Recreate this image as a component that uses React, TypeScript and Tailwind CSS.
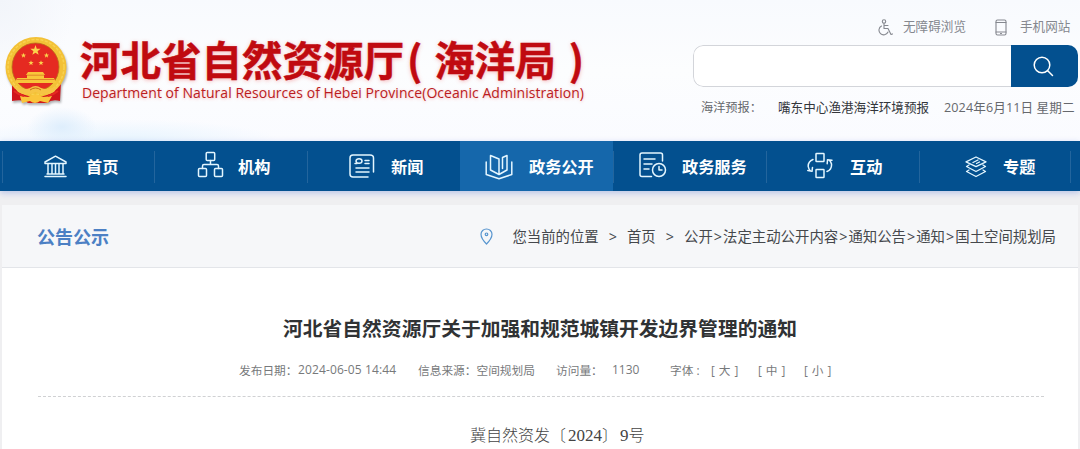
import React from 'react';

const SANS = "font-['Open_Sans','Noto_Sans_CJK_SC',sans-serif]";

type IconProps = { className: string; children: React.ReactNode; box: string };
function Icon({ className, children, box }: IconProps) {
  return (
    <svg className={className} viewBox={box} fill="none" stroke="currentColor" strokeWidth="1.5" strokeLinecap="round" strokeLinejoin="round">
      {children}
    </svg>
  );
}

function Star({ x, y, r }: { x: number; y: number; r: number }) {
  const pts = Array.from({ length: 10 }, (_, i) => {
    const a = (Math.PI / 5) * i - Math.PI / 2;
    const q = i % 2 ? r * 0.4 : r;
    return `${x + q * Math.cos(a)},${y + q * Math.sin(a)}`;
  }).join(' ');
  return <polygon points={pts} fill="#fbd34c" />;
}

function Emblem() {
  return (
    <svg className="h-[70px] w-[66px] shrink-0 drop-shadow-[1px_2px_1px_rgba(0,0,0,0.3)]" viewBox="0 0 66 70">
      <path d="M8 46 L8 65 Q20 63 24 67 L43 67 Q48 63 56 65 L57 46Z" fill="#cf151b" />
      <ellipse cx="32" cy="31" rx="30.5" ry="30" fill="#f3c136" />
      <ellipse cx="32" cy="31" rx="28" ry="27.5" fill="none" stroke="#f8d250" strokeWidth="1.5" strokeDasharray="3 1.5" />
      <ellipse cx="31.5" cy="31" rx="23.500" ry="24" fill="#e52a21" stroke="#b9701c" strokeWidth="0.8" />
      <Star x={31.5} y={14.5} r={5.4} />
      <Star x={19.5} y={19.5} r={2.8} />
      <Star x={42.5} y={19.5} r={2.8} />
      <Star x={27} y={27} r={2.8} />
      <Star x={37} y={27} r={2.8} />
      <path d="M24 36h15l2 3h-1v3h10l2 5H11l2-5h10v-3h-1z" fill="#f8c63a" />
      <path d="M23 39.200h17M13 43.500h37" stroke="#d66a20" strokeWidth="0.7" />
      <path d="M8 48Q18 55 26 52Q31.500 48 37 52Q46 55 56 48L50 56Q42 61 31.500 56Q22 61 14 56Z" fill="#f6c444" />
      <path d="M26 54q5.500-4 11 0" stroke="#c9671c" fill="none" />
      <path d="M16 60l8 1 7.500-3 7.500 3 9-1-4 7-8-2q-5 4-10 0l-8 2z" fill="#fac53b" />
      <path d="M10 55q5 4 10 5M54 55q-5 4-10 5" stroke="#e52a21" strokeWidth="2" fill="none" />
    </svg>
  );
}

const navItems: { label: string; cell: string; text: string; active?: boolean; icon: React.ReactNode }[] = [
  {
    label: '首页', cell: 'w-[152px] pl-[42px]', text: 'ml-[19px]',
    icon: (
      <Icon className="h-[23px] w-[23px]" box="0 0 23 23">
        <path d="M1 8.500V7L11.500 1.200 22 7v1.500zM3 21.500h17M1 21.500h21M3 19h17M4 9v10M8 9v10M11.500 9v10M15 9v10M19 9v10" />
      </Icon>
    ),
  },
  {
    label: '机构', cell: 'w-[153px] pl-[43px]', text: 'ml-[14px]',
    icon: (
      <Icon className="mb-[3px] h-[27px] w-[27px]" box="0 0 27 27">
        <rect x="9.200" y="1.500" width="8.500" height="8" rx="1" /><rect x="1.500" y="17.500" width="8" height="8" rx="1" /><rect x="17.500" y="17.500" width="8" height="8" rx="1" />
        <path d="M13.500 9.500v4M5.500 17.500v-2.500q0-1.500 1.500-1.500h13q1.500 0 1.500 1.500v2.500" />
      </Icon>
    ),
  },
  {
    label: '新闻', cell: 'w-[153px] pl-[42px]', text: 'ml-[16px]',
    icon: (
      <Icon className="mb-[1px] h-[24px] w-[26px]" box="0 0 26 24">
        <path d="M19 23H4q-3 0-3-3V4q0-3 3-3h17q3.500 0 3.500 3v14M16 6.500h4M16 9.500h4M7 14h13M7 18h13M6 9.500h2" /><ellipse cx="10" cy="7" rx="3" ry="2.300" />
      </Icon>
    ),
  },
  {
    label: '政务公开', cell: 'w-[153px] pl-[25px]', text: 'ml-[16px]', active: true,
    icon: (
      <Icon className="mt-[1px] h-[26px] w-[28px]" box="0 0 28 26">
        <path d="M1.200 8v12.500L14 24.800l12.800-4.300V8M14 5 5.500 1.500v14.500L14 20.500M14 20.500l8-4.500V1.500L17.500 3.500v11M14 5v15.500" />
      </Icon>
    ),
  },
  {
    label: '政务服务', cell: 'w-[153px] pl-[26px]', text: 'ml-[15px]',
    icon: (
      <Icon className="mb-[2px] h-[26px] w-[28px]" box="0 0 28 26">
        <path d="M23.500 9V3q0-2-2-2H3Q1 1 1 3v19.500q0 2 2 2h9.500M5 7h11M5 12h8M5 17h5" /><circle cx="20" cy="18" r="6.500" /><path d="M20 14.500V18h3" />
      </Icon>
    ),
  },
  {
    label: '互动', cell: 'w-[153px] pl-[41px]', text: 'ml-[17px]',
    icon: (
      <Icon className="mb-[1px] h-[27px] w-[26px]" box="0 0 26 27">
        <rect x="9" y="1.500" width="8" height="8" rx="0.600" /><rect x="9" y="17.500" width="8" height="8" rx="0.600" />
        <path d="M6 7.500Q1 9.500 1.200 14.500q.4 2.500 2.300 4.500M.8 18.500l4.200.8.500-3.900M20 19.500Q25 17.500 24.500 12 24 10 22.500 8.300M25 8.200l-4.500-.5-.3 4" />
      </Icon>
    ),
  },
  {
    label: '专题', cell: 'w-[151px] pl-[46px]', text: 'ml-[16px]',
    icon: (
      <Icon className="mt-[1px] h-[22px] w-[22px]" box="0 0 22 22">
        <path d="M11 1 21 5.800 11 10.600 1 5.800zM4 9l-2.500 1.500L11 15.500l9.500-5L18 9M4 14l-2.500 1.500L11 20.500l9.500-5L18 14M8 6.500l5-2.500M11.500 7.500l3-1.500" strokeWidth="1.300" />
      </Icon>
    ),
  },
];

function Header() {
  return (
    <header className="flex h-[141px] items-start overflow-hidden bg-[radial-gradient(ellipse_35px_20px_at_62px_127px,#deeefc,transparent),radial-gradient(ellipse_160px_22px_at_120px_141px,#e6f4fe,transparent),radial-gradient(ellipse_75px_90px_at_0px_0px,#f2f5fa,transparent),linear-gradient(180deg,#f8fafe,#fcfdfe_50%,#fafbff)]">
      <div className="flex pt-[36px] pl-[4px]">
        <Emblem />
        <div className="ml-[10px] w-[520px] whitespace-nowrap">
          <h1 className="flex h-[45px] items-center font-['Noto_Sans_CJK_SC',sans-serif] text-[40.500px] leading-[40px] font-bold text-[#c00a10] [text-shadow:0_1px_4px_rgba(240,90,90,0.45)] [-webkit-text-stroke:0.5px_#c00a10]">
            <span>河北省自然资源厅</span>
            <span className="ml-[3px]">(</span>
            <span className="ml-[12px]">海洋局</span>
            <span className="ml-[13px]">)</span>
          </h1>
          <p className="mt-[4px] ml-[2px] h-[18px] font-['Open_Sans',sans-serif] text-[14px] leading-[16px] tracking-[0.045px] text-[#bb1c22] [text-shadow:0_1px_3px_rgba(240,90,90,0.4)]">
            Department of Natural Resources of Hebei Province(Oceanic Administration)
          </p>
        </div>
      </div>
      <div className="ml-auto w-[387px] pt-[17px] whitespace-nowrap">
        <div className="flex h-[20px] items-center pl-[183px] text-[12.600px] leading-[20px] text-[#85888f]">
          <Icon className="h-[17px] w-[17px]" box="0 0 17 17">
            <g strokeWidth="1.100"><circle cx="8" cy="2.500" r="1.700" /><path d="M8 4.500v5h4l3 6 1.500-.6M8 6.500h4M5.500 7A4.700 4.700 0 1 0 12 13" /></g>
          </Icon>
          <span className="ml-[10px]">无障碍浏览</span>
          <Icon className="ml-[29px] h-[17px] w-[12px]" box="0 0 12 17">
            <g strokeWidth="1.100"><rect x="1" y="1" width="10" height="15" rx="1.500" /><path d="M1 3.500h10M1 13h10M5.500 14.500h1" /></g>
          </Icon>
          <span className="ml-[13px]">手机网站</span>
        </div>
        <div className="mt-[8px] flex h-[42px] w-[385px] overflow-hidden rounded-[10px]">
          <div className="flex-1 rounded-l-[10px] border border-r-0 border-[#d3d5da] bg-white" />
          <button className="flex w-[67px] items-center justify-center bg-[#03508f] text-white" aria-label="搜索">
            <Icon className="mr-[2px] h-[21px] w-[21px]" box="0 0 21 21"><circle cx="9" cy="9" r="7.800" /><path d="M14.700 14.700 19.500 19.500" /></Icon>
          </button>
        </div>
        <div className="mt-[11px] flex h-[20px] items-center pl-[8px] text-[12.600px] leading-[20px] text-[#66686d]">
          <span className="w-[77px] text-[12.200px]">海洋预报：</span>
          <span className="w-[166px] text-[#33363b]">嘴东中心渔港海洋环境预报</span>
          <span className="tracking-[0.100px]">2024年6月11日 星期二</span>
        </div>
      </div>
    </header>
  );
}

function Nav() {
  return (
    <nav className="relative flex h-[50px] bg-[#03508f] pl-[2px] shadow-[0_2px_6px_rgba(120,145,220,0.45)]">
      {navItems.map((n) => (
        <a key={n.label} className={`relative flex items-center text-[#e4f6ff] ${n.cell} ${n.active ? 'bg-[#1567ab]' : ''}`}>
          <span className={`absolute top-[10px] left-0 h-[32px] w-px ${n.active ? 'bg-[#1567ab]' : 'bg-[#23659d]'}`} />
          {n.icon}
          <span className={`mt-[1px] text-[16.200px] leading-[24px] font-bold whitespace-nowrap text-white ${n.text}`}>{n.label}</span>
        </a>
      ))}
      <span className="mt-[10px] h-[32px] w-px bg-[#23659d]" />
    </nav>
  );
}

const trail = ['公开', '法定主动公开内容', '通知公告', '通知', '国土空间规划局'];

function Breadcrumb() {
  return (
    <div className="mx-[2px] mt-[14px] flex h-[63px] items-center justify-between border-b border-[#e3e5e9] bg-[#f6f7f9] pt-[1px] pr-[22px] pl-[35px] whitespace-nowrap">
      <h2 className="text-[18px] leading-[24px] font-bold text-[#4c80c4]">公告公示</h2>
      <div className="flex items-center text-[14.400px] leading-[20px] text-[#45484c]">
        <Icon className="h-[17px] w-[13px] text-[#5795cf]" box="0 0 13 17">
          <g strokeWidth="1.200"><path d="M6.500 16Q1 10.500 1 6.300a5.500 5.300 0 0 1 11 0Q12 10.500 6.500 16z" /><circle cx="6.500" cy="6.300" r="1.300" /></g>
        </Icon>
        <span className="ml-[19px]">您当前的位置</span>
        <span className="mx-[10px]">&gt;</span>
        <span>首页</span>
        <span className="mx-[10px]">&gt;</span>
        {trail.map((t, i) => (
          <React.Fragment key={t}>
            {i > 0 && <span className="mx-[1px]">&gt;</span>}
            <span>{t}</span>
          </React.Fragment>
        ))}
      </div>
    </div>
  );
}

function Article() {
  return (
    <main className="mx-[2px] h-[181px] bg-white pt-[46px] pr-[34px] pl-[36px] whitespace-nowrap">
      <h1 className="mr-[2px] text-center text-[19.770px] leading-[30px] font-bold text-[#303234]">河北省自然资源厅关于加强和规范城镇开发边界管理的通知</h1>
      <div className="mt-[16px] flex h-[20px] items-center pl-[201px] text-[11.700px] leading-[20px] text-[#77797b]">
        <span className="w-[59px]">发布日期：</span>
        <span className="w-[120px] text-[12px] tracking-[0.120px]">2024-06-05 14:44</span>
        <span className="w-[138px]">信息来源：空间规划局</span>
        <span className="w-[56px]">访问量：</span>
        <span className="w-[58px] text-[12px]">1130</span>
        <span className="w-[41px]">字体 :</span>
        <span className="w-[47px] tracking-[0.450px]">[ 大 ]</span>
        <span className="w-[46px] tracking-[0.450px]">[ 中 ]</span>
        <span className="tracking-[0.450px]">[ 小 ]</span>
      </div>
      <div className="mt-[16px] border-t border-dashed border-[#d0d1d3]" />
      <p className="mt-[27px] flex pl-[432px] font-['Liberation_Serif','Noto_Sans_CJK_SC',serif] text-[16px] leading-[24px] font-light text-[#444]">
        <span>冀自然资发〔</span>
        <span className="ml-[2px] text-[17px]">2024</span>
        <span>〕</span>
        <span className="ml-[2px] text-[17px]">9</span>
        <span>号</span>
      </p>
    </main>
  );
}

export default function App() {
  return (
    <div className={`h-[449px] w-[1080px] overflow-hidden bg-[#efeff1] ${SANS}`}>
      <Header />
      <Nav />
      <Breadcrumb />
      <Article />
    </div>
  );
}
